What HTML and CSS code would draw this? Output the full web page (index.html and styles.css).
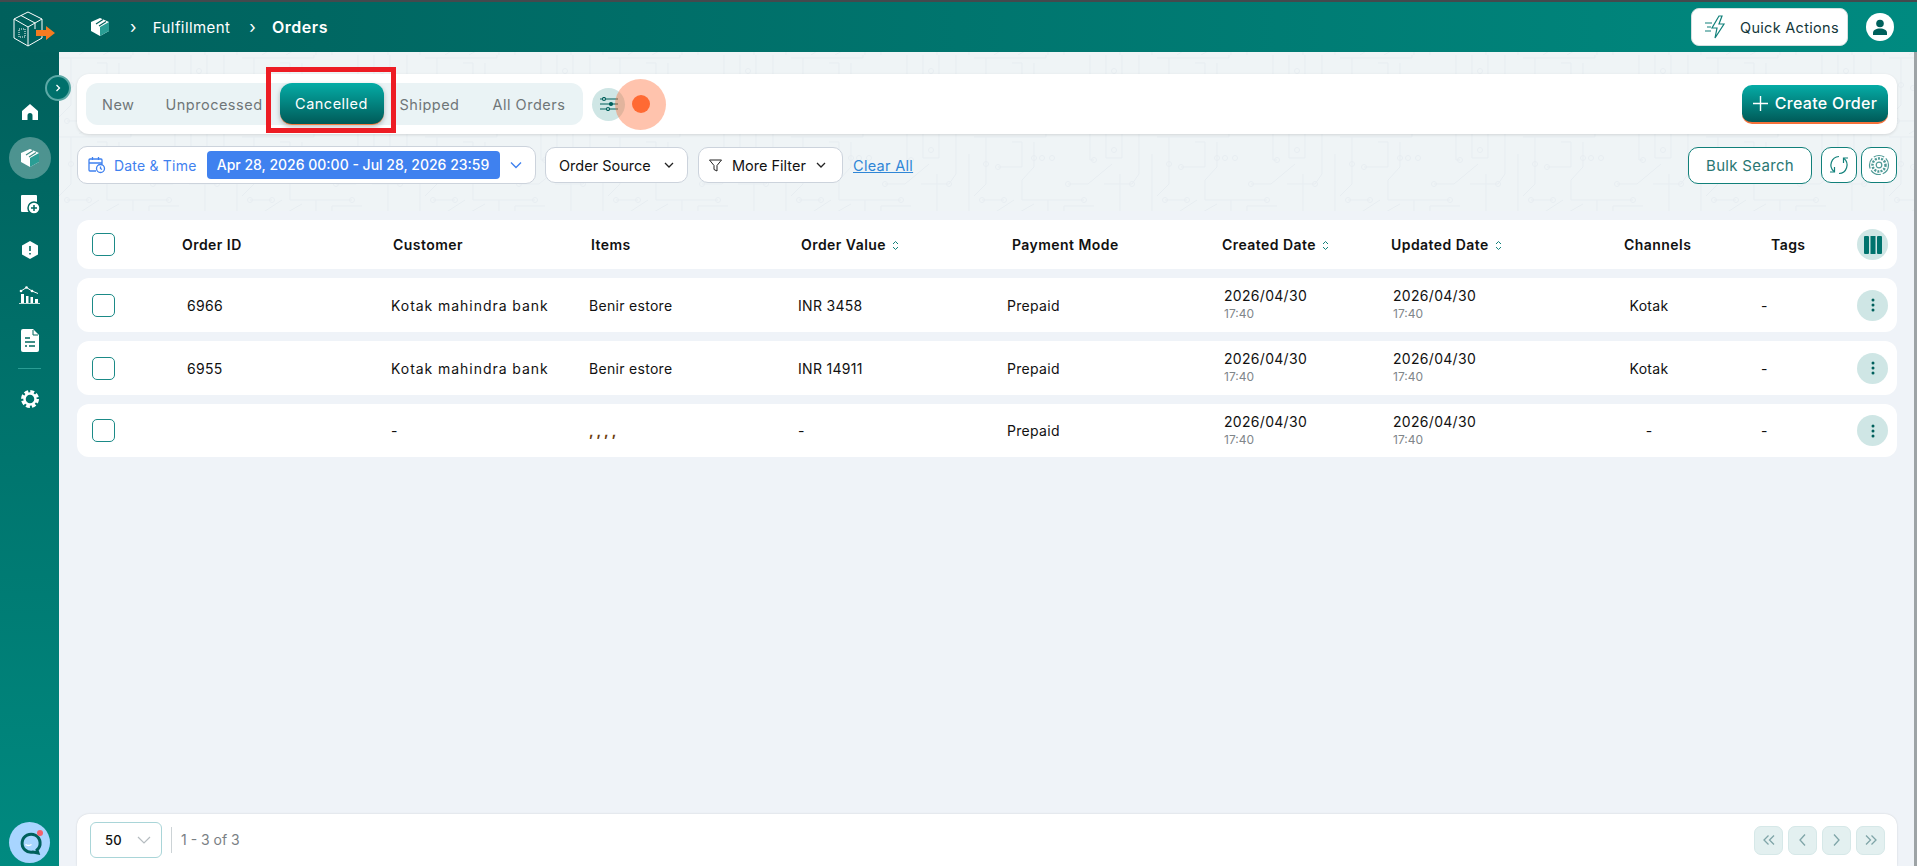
FILE: index.html
```html
<!doctype html>
<html lang="en">
<head>
    <meta charset="UTF-8">
    <title>Orders</title>
    <link rel="stylesheet" href="styles.css">
</head>
<body>
<header class="topbar">
    <svg class="logo" width="46" height="42" viewBox="0 0 46 42" fill="none" stroke="#fff" stroke-width="1">
        <path d="M15 1 29 8V27L15 35 1 27V8Z"/>
        <path d="M1 8 15 16 29 8M15 16V35M8 4.500 22 12V18"/>
        <path d="M6 18h6v8H6z" stroke-dasharray="1 1"/>
        <path d="M23 19h10v-4l9 7-9 7v-4H23z" fill="#f47b20" stroke="none"/>
    </svg>
    <nav class="crumbs">
        <svg class="crumb-icon" width="20" height="20" viewBox="0 0 20 20"><path d="M10 1 19 5V14L10 19 1 14V5Z" fill="#fff"/><path d="M10 19V10L19 5V14Z" fill="#2a9d94"/><path d="M6 7 13 2.500M9 9 16 4.500" stroke="#00605c" stroke-width="1.200"/></svg>
        <span class="crumb-sep">›</span>
        <span class="crumb">Fulfillment</span>
        <span class="crumb-sep">›</span>
        <b class="crumb-now">Orders</b>
    </nav>
    <button type="button" class="quick">
        <svg width="24" height="24" viewBox="0 0 24 24" fill="none" stroke="#11807a" stroke-width="1.200"><path d="M15 1 8 13h5l-2 10 9-14h-5l3-8z"/><path d="M1 8h7M3 12h4M1 16h6"/></svg>
        Quick Actions
    </button>
    <span class="avatar"><svg width="16" height="16" viewBox="0 0 16 16" fill="#00605c"><circle cx="8" cy="4.500" r="3.800"/><path d="M1 16v-2c0-3 3-4.500 7-4.500s7 1.500 7 4.500v2z"/></svg></span>
</header>

<div class="shell">
    <aside class="sidebar">
        <span class="side-toggle"><svg width="10" height="10" viewBox="0 0 10 10" fill="none" stroke="#fff" stroke-width="1.300"><path d="M3.500 2 6.500 5 3.500 8"/></svg></span>
        <a class="side-item"><svg width="16" height="16" viewBox="0 0 16 16"><path d="M8 0 16 7V16H10.500V11.500a2.500 2.500 0 0 0-5 0V16H0V7Z" fill="#fff"/></svg></a>
        <a class="side-item side-active"><svg width="20" height="20" viewBox="0 0 20 20"><path d="M10 1 19 5V14L10 19 1 14V5Z" fill="#fff"/><path d="M10 19V10L19 5V14Z" fill="#2a9d94"/><path d="M6 7 13 2.500M9 9 16 4.500" stroke="#3f8c86" stroke-width="1.200"/></svg></a>
        <a class="side-item"><svg width="20" height="20" viewBox="0 0 20 20"><path d="M2 1h14a1 1 0 0 1 1 1V18H2a1 1 0 0 1-1-1V2a1 1 0 0 1 1-1Z" fill="#fff"/><circle cx="14" cy="14" r="6" fill="#fff" stroke="#00685f" stroke-width="1.500"/><path d="M11 14h6M14 11v6" stroke="#00685f" stroke-width="1.500"/></svg></a>
        <a class="side-item"><svg width="16" height="18" viewBox="0 0 16 18"><path d="M8 0 16 4.500V13.500L8 18 0 13.500V4.500Z" fill="#fff"/><path d="M8 5V10M8 12V13.500" stroke="#00685f" stroke-width="1.600"/></svg></a>
        <a class="side-item side-chart"><svg width="21" height="18" viewBox="0 0 21 18" fill="#fff"><path d="M2 8h3v9H2zM7 10h2.500v7H7zM11.500 11H14v6h-2.500zM16 13h3v4h-3zM0 17.200h21v.8H0z"/><path d="M2 5 7.500 1.500 13 5 19 7.500" fill="none" stroke="#fff"/><circle cx="2" cy="5" r="1.300"/><circle cx="7.500" cy="1.500" r="1.300"/><circle cx="13" cy="5" r="1.300"/></svg></a>
        <a class="side-item side-doc"><svg width="18" height="23" viewBox="0 0 18 23"><path d="M2 0H12L18 6V21a2 2 0 0 1-2 2H2a2 2 0 0 1-2-2V2a2 2 0 0 1 2-2Z" fill="#fff"/><path d="M4 9h5M4 13h10M4 17h2M8 17h6" stroke="#00685f" stroke-width="1.500"/><path d="M12 1v5h5" fill="none" stroke="#00685f"/></svg></a>
        <hr class="side-line">
        <a class="side-item"><svg width="18" height="18" viewBox="0 0 18 18"><circle cx="9" cy="9" r="7.500" fill="none" stroke="#fff" stroke-width="3" stroke-dasharray="3.900 2"/><circle cx="9" cy="9" r="5.500" fill="none" stroke="#fff" stroke-width="2.500"/></svg></a>
        <span class="chat">
            <svg width="26" height="26" viewBox="0 0 26 26" fill="none" stroke="#00605c" stroke-width="3"><path d="M20 20a9 9 0 1 0-4 2l5 1z"/><path d="M8.500 14.500q3 2 6 0" stroke="#fff" stroke-width="1.500"/></svg>
            <i class="chat-dot"></i>
        </span>
    </aside>

    <main class="main">
        <svg class="circuit" width="100%" height="159">
            <defs>
                <pattern id="wires" width="183" height="79" patternUnits="userSpaceOnUse" y="3">
                    <g fill="none" stroke="#e7edf1" stroke-width="1">
                        <path d="M0 3H72V0M12 3V50L0 62M38 8H48V33H24M60 8V33L48 46V66H110M116 0V26H120M132 0V24H148V0M94 50H114L138 30M74 66V79M40 66 20 79M90 79V72H120M146 40V79M165 0V40L158 50H130M178 20V79M8 66H30M60 70 44 79"/>
                        <circle cx="12" cy="30" r="2.500"/>
                        <circle cx="24" cy="33" r="2.500"/>
                        <circle cx="8" cy="66" r="2.500"/>
                        <circle cx="30" cy="66" r="2.500"/>
                        <circle cx="60" cy="24" r="2.500"/>
                        <circle cx="68" cy="24" r="2.500"/>
                        <circle cx="78" cy="24" r="2.500"/>
                        <circle cx="94" cy="50" r="2.500"/>
                        <circle cx="110" cy="66" r="2.500"/>
                        <circle cx="120" cy="26" r="2.500"/>
                        <circle cx="140" cy="16" r="2.500"/>
                        <circle cx="158" cy="50" r="2.500"/>
                    </g>
                </pattern>
            </defs>
            <rect width="100%" height="159" fill="#eff4f6"/>
            <rect width="100%" height="159" fill="url(#wires)"/>
        </svg>

        <section class="tabbar">
            <div class="tabs">
                <a class="tab tab-new">New</a>
                <a class="tab tab-unp">Unprocessed</a>
                <a class="tab tab-on">Cancelled</a>
                <a class="tab tab-ship">Shipped</a>
                <a class="tab tab-all">All Orders</a>
                <i class="red-box"></i>
            </div>
            <span class="tune">
                <svg width="18" height="14" viewBox="0 0 18 14" fill="none" stroke="#00605c" stroke-width="1.200"><path d="M0 2h18M0 7h18M0 12h18"/><circle cx="4" cy="2" r="1.500" fill="#cfe6e5"/><circle cx="11" cy="7" r="1.500" fill="#00605c"/><circle cx="8" cy="12" r="1.500" fill="#cfe6e5"/></svg>
                <i class="pulse"><i class="pulse-dot"></i></i>
            </span>
            <button type="button" class="create">
                <svg width="15" height="15" viewBox="0 0 15 15" fill="none" stroke="#fff" stroke-width="1.400"><path d="M7.500 0V15M0 7.500H15"/></svg>
                Create Order
            </button>
        </section>

        <section class="filters">
            <div class="date-box">
                <svg width="18" height="18" viewBox="0 0 18 18" fill="none" stroke="#3f81ef" stroke-width="1.300"><path d="M8 15H2a1 1 0 0 1-1-1V4a1 1 0 0 1 1-1h11a1 1 0 0 1 1 1v4M1 7h13M4.500 1v3M10.500 1v3"/><circle cx="12.500" cy="12.500" r="4"/><path d="M12.500 10.500v2l1.500 1"/></svg>
                <span class="date-label">Date &amp; Time</span>
                <span class="date-range">Apr 28, 2026 00:00 - Jul 28, 2026 23:59</span>
                <svg class="date-caret" width="12" height="8" viewBox="0 0 12 8" fill="none" stroke="#3f81ef" stroke-width="1.400"><path d="M1 1.500 6 6.500 11 1.500"/></svg>
            </div>
            <div class="pick pick-source">Order Source
                <svg width="10" height="7" viewBox="0 0 10 7" fill="none" stroke="#222" stroke-width="1.300"><path d="M1 1 5 5 9 1"/></svg>
            </div>
            <div class="pick pick-more">
                <svg width="13" height="13" viewBox="0 0 13 13" fill="none" stroke="#222"><path d="M.5 1h12L8 6.500V12L5 10.500v-4Z"/></svg>
                More Filter
                <svg width="10" height="7" viewBox="0 0 10 7" fill="none" stroke="#222" stroke-width="1.300"><path d="M1 1 5 5 9 1"/></svg>
            </div>
            <a class="clear">Clear All</a>
            <button type="button" class="bulk">Bulk Search</button>
            <button type="button" class="square">
                <svg width="22" height="22" viewBox="0 0 22 22" fill="none" stroke="#11807a" stroke-width="1.200"><path d="M11 2.500a8.500 8.500 0 0 0-5 15M11 19.500a8.500 8.500 0 0 0 5-15"/><path d="M6.500 13v5H2M15.500 9V4H20"/></svg>
            </button>
            <button type="button" class="square">
                <svg width="22" height="22" viewBox="0 0 22 22" fill="none" stroke="#4f9a96" stroke-width="1.200"><circle cx="11" cy="11" r="9.500" stroke-dasharray="11 2"/><circle cx="11" cy="11" r="6.500" stroke-width="2.500" stroke-dasharray="2 1.200"/><circle cx="11" cy="11" r="2.800"/></svg>
            </button>
        </section>

        <section class="table">
            <div class="row row-head">
                <span class="box"></span>
                <span>Order ID</span>
                <span class="h-cust">Customer</span>
                <span class="h-items">Items</span>
                <span class="h-value">Order Value <svg class="sort" width="7" height="11" viewBox="0 0 7 11" fill="none" stroke="#11807a"><path d="M1 4 3.500 1.500 6 4M1 7 3.500 9.500 6 7"/></svg></span>
                <span class="h-pay">Payment Mode</span>
                <span>Created Date <svg class="sort" width="7" height="11" viewBox="0 0 7 11" fill="none" stroke="#11807a"><path d="M1 4 3.500 1.500 6 4M1 7 3.500 9.500 6 7"/></svg></span>
                <span>Updated Date <svg class="sort" width="7" height="11" viewBox="0 0 7 11" fill="none" stroke="#11807a"><path d="M1 4 3.500 1.500 6 4M1 7 3.500 9.500 6 7"/></svg></span>
                <span>Channels</span>
                <span class="h-tags">Tags</span>
                <span class="round"><svg width="18" height="18" viewBox="0 0 18 18" fill="#00736d"><rect x="0" y="0" width="5" height="18" rx="1"/><rect x="6.500" y="0" width="5" height="18"/><rect x="13" y="0" width="5" height="18" rx="1"/></svg></span>
            </div>

            <div class="row row-1">
                <span class="box"></span>
                <span class="c-id">6966</span>
                <span class="c-name">Kotak mahindra bank</span>
                <span>Benir estore</span>
                <span>INR 3458</span>
                <span>Prepaid</span>
                <span class="c-date">2026/04/30<small>17:40</small></span>
                <span class="c-date">2026/04/30<small>17:40</small></span>
                <span class="c-chan">Kotak</span>
                <span class="c-tag">-</span>
                <span class="round"><svg width="4" height="14" viewBox="0 0 4 14" fill="#00605c"><circle cx="2" cy="2" r="1.500"/><circle cx="2" cy="7" r="1.500"/><circle cx="2" cy="12" r="1.500"/></svg></span>
            </div>

            <div class="row row-2">
                <span class="box"></span>
                <span class="c-id">6955</span>
                <span class="c-name">Kotak mahindra bank</span>
                <span>Benir estore</span>
                <span>INR 14911</span>
                <span>Prepaid</span>
                <span class="c-date">2026/04/30<small>17:40</small></span>
                <span class="c-date">2026/04/30<small>17:40</small></span>
                <span class="c-chan">Kotak</span>
                <span class="c-tag">-</span>
                <span class="round"><svg width="4" height="14" viewBox="0 0 4 14" fill="#00605c"><circle cx="2" cy="2" r="1.500"/><circle cx="2" cy="7" r="1.500"/><circle cx="2" cy="12" r="1.500"/></svg></span>
            </div>

            <div class="row row-3">
                <span class="box"></span>
                <span class="c-id"></span>
                <span>-</span>
                <span class="c-commas">, , , ,</span>
                <span>-</span>
                <span>Prepaid</span>
                <span class="c-date">2026/04/30<small>17:40</small></span>
                <span class="c-date">2026/04/30<small>17:40</small></span>
                <span class="c-chan">-</span>
                <span class="c-tag">-</span>
                <span class="round"><svg width="4" height="14" viewBox="0 0 4 14" fill="#00605c"><circle cx="2" cy="2" r="1.500"/><circle cx="2" cy="7" r="1.500"/><circle cx="2" cy="12" r="1.500"/></svg></span>
            </div>
        </section>

        <footer class="pager">
            <div class="per-page">50
                <svg width="14" height="8" viewBox="0 0 14 8" fill="none" stroke="#b5bcc0" stroke-width="1.200"><path d="M1 1 7 7 13 1"/></svg>
            </div>
            <span class="count">1 - 3 of 3</span>
            <div class="pages">
                <button type="button" class="page"><svg width="12" height="10" viewBox="0 0 12 10" fill="none" stroke="#7fa5a8" stroke-width="1.300"><path d="M5.500 .5 1 5 5.500 9.500M11 .5 6.500 5 11 9.500"/></svg></button>
                <button type="button" class="page"><svg width="7" height="12" viewBox="0 0 7 12" fill="none" stroke="#7fa5a8" stroke-width="1.300"><path d="M6 .5 1 6 6 11.500"/></svg></button>
                <button type="button" class="page"><svg width="7" height="12" viewBox="0 0 7 12" fill="none" stroke="#7fa5a8" stroke-width="1.300"><path d="M1 .5 6 6 1 11.500"/></svg></button>
                <button type="button" class="page"><svg width="12" height="10" viewBox="0 0 12 10" fill="none" stroke="#7fa5a8" stroke-width="1.300"><path d="M1 .5 5.500 5 1 9.500M6.500 .5 11 5 6.500 9.500"/></svg></button>
            </div>
        </footer>
    </main>
</div>
</body>
</html>
```

FILE: styles.css
```css
* {
    margin: 0;
    padding: 0;
    box-sizing: border-box;
}

html, body {
    height: 100%;
    overflow: hidden;
}

body {
    display: flex;
    flex-direction: column;
    font-family: "Inter", "Noto Sans", sans-serif;
    font-size: 14px;
    letter-spacing: 0.3px;
    color: #111;
    background-color: #eff3f8;
}

button {
    font: inherit;
    letter-spacing: inherit;
    background: none;
    cursor: pointer;
}

/* top bar */
.topbar {
    display: flex;
    align-items: center;
    height: 52px;
    flex: none;
    border-top: 2px solid #44494d;
    padding: 0 23px 0 13px;
    background: linear-gradient(90deg, #00605c, #008a80);
    color: #fff;
}

.logo {
    margin-top: 10px;
}

.crumbs {
    display: flex;
    align-items: center;
    margin-left: 31px;
    flex: 1;
}

.crumb-sep {
    font-size: 17px;
    margin: 0 16px 0 20px;
}

.crumb {
    font-size: 15px;
    letter-spacing: 0.4px;
}

.crumb + .crumb-sep {
    margin: 0 16px 0 19px;
}

.crumb-now {
    font-size: 16px;
    font-weight: 600;
    letter-spacing: 0.5px;
}

.quick {
    display: flex;
    align-items: center;
    gap: 12px;
    width: 157px;
    height: 38px;
    padding-left: 12px;
    border: 1px solid #d5dfe0;
    border-radius: 8px;
    background-color: #fff;
    color: #12363a;
    font-size: 14.500px;
    white-space: nowrap;
}

.avatar {
    display: flex;
    align-items: center;
    justify-content: center;
    width: 28px;
    height: 28px;
    margin-left: 18px;
    border-radius: 50%;
    background-color: #fff;
}

/* sidebar */
.shell {
    flex: 1;
    display: flex;
    min-height: 0;
}

.sidebar {
    position: relative;
    width: 59px;
    flex: none;
    display: flex;
    flex-direction: column;
    align-items: center;
    padding-top: 39px;
    background: linear-gradient(180deg, #00605c, #008a80);
}

.side-toggle {
    position: absolute;
    top: 23px;
    left: 45px;
    z-index: 3;
    display: flex;
    align-items: center;
    justify-content: center;
    width: 26px;
    height: 26px;
    border: 2px solid #5da9a6;
    border-radius: 50%;
    background-color: #00706b;
}

.side-item {
    display: flex;
    align-items: center;
    justify-content: center;
    width: 42px;
    height: 42px;
    margin-bottom: 4px;
    border-radius: 50%;
}

.side-chart {
    margin-top: -1px;
}

.side-doc {
    margin-top: -1px;
}

.side-active {
    background-color: rgba(255, 255, 255, 0.3);
}

.side-line {
    width: 23px;
    margin: 3px 0 9px;
    border: none;
    border-top: 1px solid #2a9d94;
}

.chat {
    position: relative;
    display: flex;
    align-items: center;
    justify-content: center;
    width: 41px;
    height: 41px;
    margin-top: auto;
    margin-bottom: 3px;
    border-radius: 50%;
    background-color: #a8d5ff;
}

.chat-dot {
    position: absolute;
    top: 8px;
    right: 7px;
    width: 6px;
    height: 6px;
    border-radius: 50%;
    background-color: #f4606c;
}

/* main column */
.main {
    position: relative;
    flex: 1;
    display: flex;
    flex-direction: column;
    min-width: 0;
    padding: 22px 17px 0 18px;
    border-right: 3px solid #9da3a6;
}

.circuit {
    position: absolute;
    top: 0;
    left: 0;
}

.tabbar,
.filters,
.table,
.pager {
    position: relative;
}

.tabbar {
    display: flex;
    align-items: center;
    height: 60px;
    padding: 0 9px;
    border-radius: 12px;
    background-color: #fff;
    box-shadow: 0 1px 3px rgba(0, 0, 0, 0.12);
}

.tabs {
    position: relative;
    display: flex;
    align-items: center;
    width: 497px;
    height: 42px;
    border-radius: 12px;
    background-color: #eaf3f5;
}

.tab {
    font-size: 14.500px;
    letter-spacing: 0.500px;
    color: #6f7678;
}

.tab-new {
    margin-left: 16px;
}

.tab-unp {
    margin-left: 31px;
}

.tab-on {
    display: flex;
    align-items: center;
    justify-content: center;
    width: 104px;
    height: 42px;
    margin-left: 17px;
    border-radius: 12px;
    border-bottom: 1px solid #f47b40;
    background: linear-gradient(180deg, #05aca6, #005a58);
    color: #fff;
    box-shadow: 0 2px 5px rgba(0, 0, 0, 0.25);
}

.tab-ship {
    margin-left: 16px;
}

.tab-all {
    margin-left: 33px;
}

.red-box {
    position: absolute;
    top: -16px;
    left: 180px;
    width: 130px;
    height: 66px;
    border: 5px solid #ed1c24;
}

.tune {
    position: relative;
    display: flex;
    align-items: center;
    justify-content: center;
    width: 33px;
    height: 33px;
    margin-left: 9px;
    border-radius: 50%;
    background-color: #cfe6e5;
}

.pulse {
    position: absolute;
    top: -9px;
    left: 23px;
    display: flex;
    align-items: center;
    justify-content: center;
    width: 51px;
    height: 51px;
    border-radius: 50%;
    background-color: rgba(255, 106, 51, 0.4);
}

.pulse-dot {
    width: 18px;
    height: 18px;
    border-radius: 50%;
    background-color: #ff6a33;
}

.create {
    display: flex;
    align-items: center;
    justify-content: center;
    gap: 7px;
    width: 146px;
    height: 39px;
    margin-left: auto;
    border: none;
    border-bottom: 2px solid #f4713a;
    border-radius: 10px;
    background: linear-gradient(180deg, #05aca6, #005a58);
    color: #fff;
    font-size: 16px;
    font-weight: 500;
    white-space: nowrap;
}

/* filter row */
.filters {
    display: flex;
    align-items: center;
    height: 38px;
    margin-top: 12px;
}

.date-box {
    display: flex;
    align-items: center;
    width: 459px;
    height: 38px;
    padding-left: 10px;
    border: 1px solid #ccd3dc;
    border-radius: 10px;
    background-color: #fff;
}

.date-label {
    margin-left: 8px;
    color: #3f81ef;
    font-size: 14px;
    letter-spacing: 0.200px;
    white-space: nowrap;
}

.date-range {
    margin-left: 10px;
    width: 293px;
    height: 28px;
    line-height: 28px;
    text-align: center;
    border-radius: 4px;
    background-color: #3f81ef;
    color: #fff;
    font-size: 14px;
    font-weight: 500;
    letter-spacing: 0;
    white-space: nowrap;
}

.date-caret {
    margin-left: 10px;
}

.pick {
    display: flex;
    align-items: center;
    height: 36px;
    margin-left: 9px;
    border: 1px solid #ccd3dc;
    border-radius: 10px;
    background-color: #fff;
    font-size: 14.500px;
    letter-spacing: 0;
    white-space: nowrap;
}

.pick-source {
    width: 143px;
    padding: 0 13px;
    justify-content: space-between;
}

.pick-more {
    width: 145px;
    margin-left: 10px;
    padding: 0 10px;
    gap: 10px;
}

.clear {
    margin-left: 10px;
    color: #2f86d6;
    font-size: 14.500px;
    text-decoration: underline;
}

.bulk {
    width: 124px;
    height: 37px;
    margin-left: auto;
    border: 1px solid #11807a;
    border-radius: 10px;
    background-color: #fff;
    color: #2a7773;
    font-size: 15px;
}

.square {
    display: flex;
    align-items: center;
    justify-content: center;
    width: 36px;
    height: 36px;
    margin-left: 9px;
    border: 1px solid #11807a;
    border-radius: 10px;
    background-color: #fff;
}

.square + .square {
    margin-left: 4px;
}

/* table rows */
.table {
    margin-top: 36px;
    display: flex;
    flex-direction: column;
}

.row {
    display: grid;
    grid-template-columns: 90px 209px 198px 209px 209px 215px 169px 233px 139px 94px 31px;
    align-items: center;
    padding-left: 15px;
    border-radius: 12px;
    background-color: #fff;
    white-space: nowrap;
}

.row-head {
    height: 49px;
    font-weight: 600;
    letter-spacing: 0.450px;
}

.row-1 {
    height: 54px;
    margin-top: 9px;
}

.row-2 {
    height: 54px;
    margin-top: 9px;
}

.row-3 {
    height: 53px;
    margin-top: 9px;
}

.box {
    width: 23px;
    height: 23px;
    border: 1.500px solid #1b8a87;
    border-radius: 5px;
}

.h-cust,
.h-items {
    padding-left: 2px;
}

.h-value {
    padding-left: 3px;
}

.h-pay {
    padding-left: 5px;
}

.h-tags {
    padding-left: 8px;
}

.sort {
    margin-left: 2px;
    vertical-align: -1px;
}

.c-id {
    padding-left: 5px;
}

.c-name {
    letter-spacing: 0.950px;
}

.c-date {
    padding-left: 2px;
    line-height: 18px;
}

.c-date small {
    display: block;
    font-size: 12px;
    letter-spacing: 0;
    color: #80868a;
}

.c-chan {
    width: 50px;
    text-align: center;
}

.c-tag {
    margin-left: -2px;
}

.c-commas {
    color: #6b3d0c;
    font-weight: 700;
    letter-spacing: 0;
    line-height: 10px;
}

.round {
    display: flex;
    align-items: center;
    justify-content: center;
    width: 31px;
    height: 31px;
    border-radius: 50%;
    background-color: #cfe6e5;
}

/* bottom pager */
.pager {
    display: flex;
    align-items: center;
    height: 52px;
    margin-top: 357px;
    padding: 0 12px 0 13px;
    border-radius: 12px 12px 0 0;
    background-color: #fff;
    box-shadow: 0 0 2px rgba(0, 0, 0, 0.15);
}

.per-page {
    display: flex;
    align-items: center;
    justify-content: space-between;
    width: 72px;
    height: 36px;
    padding: 0 10px 0 14px;
    border: 1px solid #a9d5d8;
    border-radius: 6px;
    font-size: 13px;
    font-weight: 500;
}

.count {
    margin-left: 9px;
    padding-left: 9px;
    border-left: 1px solid #ccd3d6;
    color: #7a8084;
    font-size: 14px;
    letter-spacing: 0;
    line-height: 26px;
}

.pages {
    display: flex;
    gap: 5px;
    margin-left: auto;
}

.page {
    display: flex;
    align-items: center;
    justify-content: center;
    width: 29px;
    height: 29px;
    border: 1px solid #d6e8e8;
    border-radius: 7px;
    background-color: #e3f0f0;
}
```
